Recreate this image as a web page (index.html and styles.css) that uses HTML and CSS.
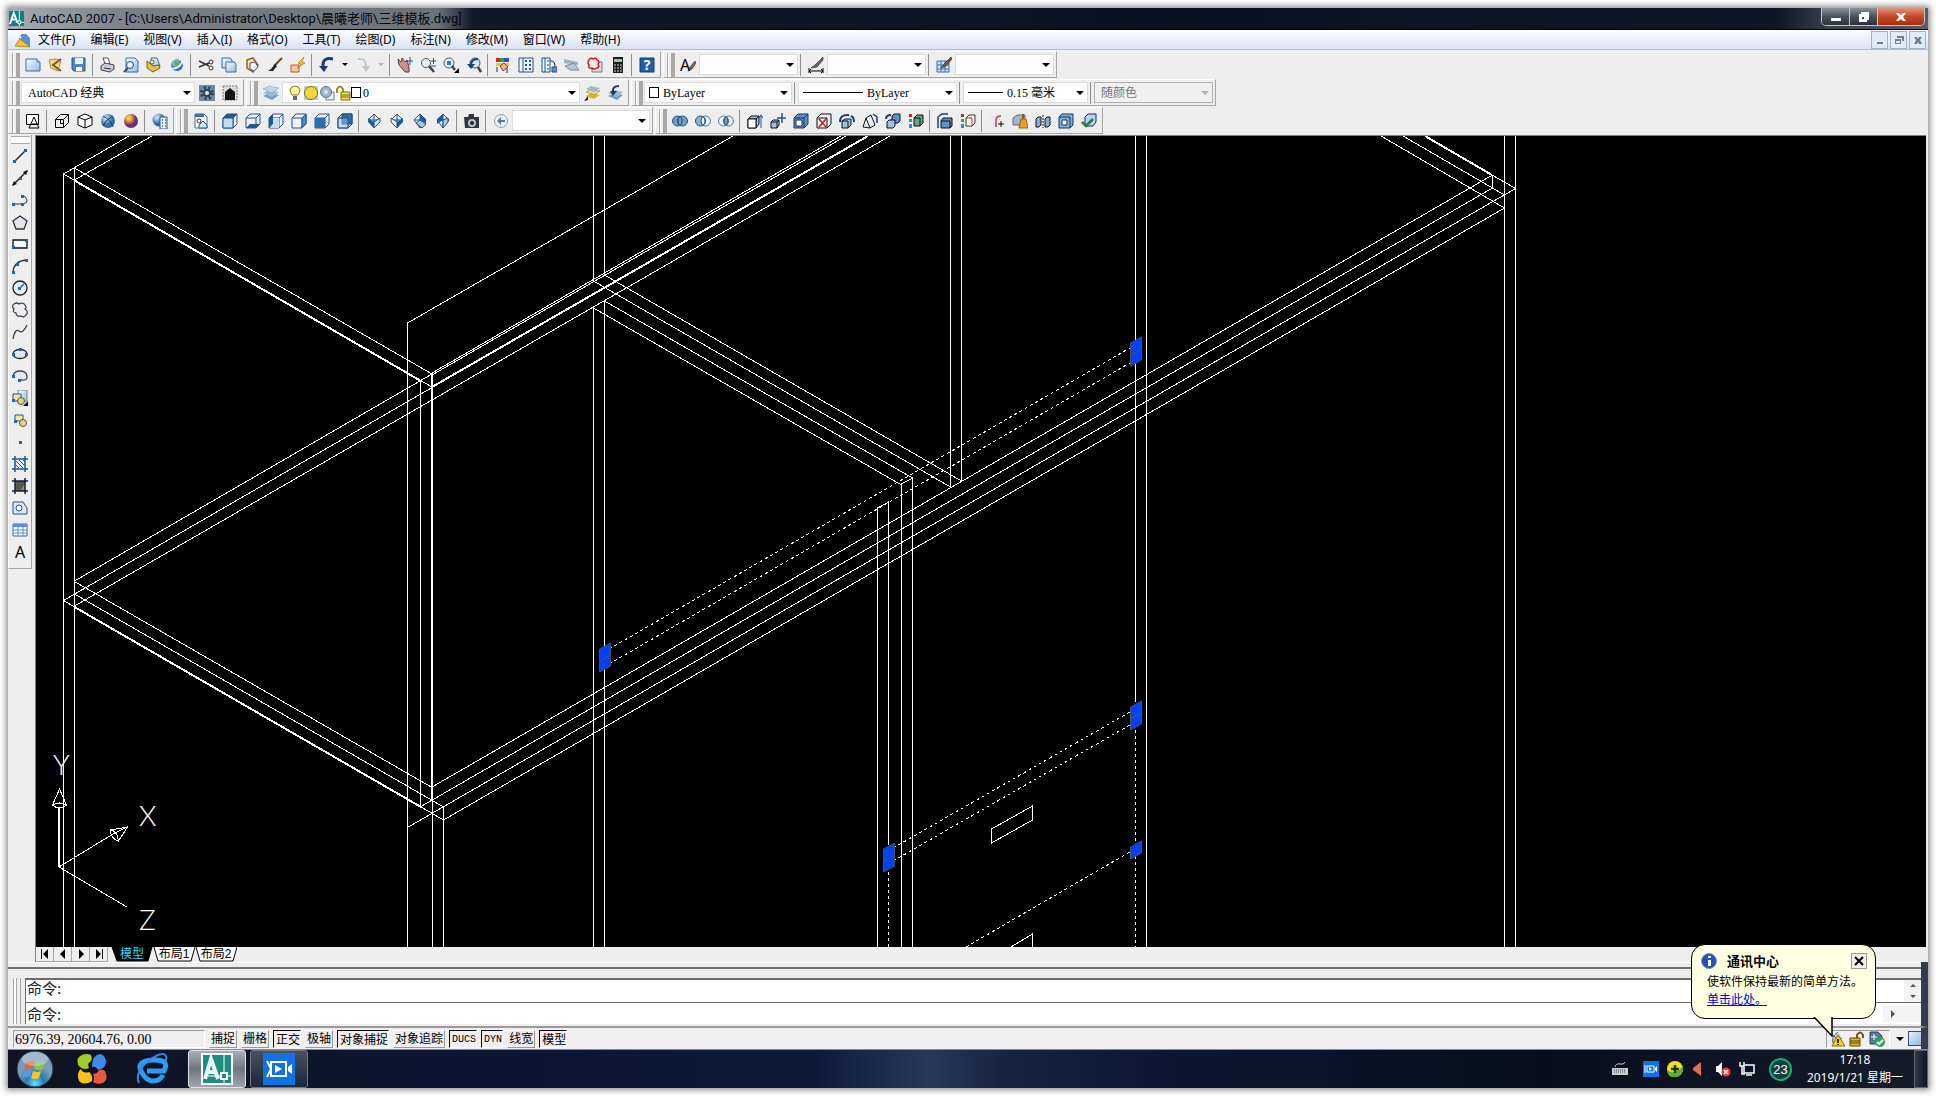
FILE: index.html
```
<!DOCTYPE html>
<html lang="zh-CN">
<head>
    <meta charset="UTF-8">
    <meta name="viewport" content="width=device-width, initial-scale=1.0">
    <title>AutoCAD 2007</title>
    <link rel="stylesheet" href="styles.css">
</head>
<body>

<!-- Icon sprite, every symbol is 16x16 -->
<svg class="sprite" aria-hidden="true">
    <defs>
        <linearGradient id="blue" x1="0" y1="0" x2="1" y2="1"><stop offset="0" stop-color="#fff"/><stop offset="1" stop-color="#8fb8e0"/></linearGradient>
        <radialGradient id="gold" cx=".35" cy=".3"><stop offset="0" stop-color="#fff0b0"/><stop offset=".4" stop-color="#f5a020"/><stop offset="1" stop-color="#6a2a80"/></radialGradient>
        <radialGradient id="orb" cx=".5" cy=".9"><stop offset="0" stop-color="#5fe0ff"/><stop offset=".5" stop-color="#2a78b4"/><stop offset="1" stop-color="#7d9bb5"/></radialGradient>
        <radialGradient id="globe" cx=".35" cy=".3"><stop offset="0" stop-color="#d8ecfa"/><stop offset="1" stop-color="#2f6ca8"/></radialGradient>
    </defs>
    <symbol id="new" viewBox="0 0 16 16"><path d="M1 2h11l3 3v9H1z" fill="url(#blue)" stroke="#3a6ea5"/><path d="M12 2v3h3" fill="#fff" stroke="#3a6ea5"/></symbol>
    <symbol id="open" viewBox="0 0 16 16"><path d="M1 3l5-1 7 1-3 11-7-3z" fill="#f2d98a" stroke="#b08a30"/><path d="M13 2L5 8l8 6" fill="none" stroke="#7a5a20" stroke-width="2"/></symbol>
    <symbol id="save" viewBox="0 0 16 16"><path d="M1 1h13v13H3l-2-2z" fill="#4f86c6" stroke="#24518c"/><path d="M4 1h8v6H4z" fill="#e8f1fa"/><path d="M5 10h6v4H5z" fill="#fff"/></symbol>
    <symbol id="plot" viewBox="0 0 16 16"><path d="M3 1h5l2 6H5z" fill="#fff" stroke="#555"/><path d="M1 9l4-3 9 2v4l-4 3-9-2z" fill="#c8ccd4" stroke="#444"/><path d="M4 11l7 1" stroke="#333"/></symbol>
    <symbol id="preview" viewBox="0 0 16 16"><path d="M3 1h9l3 3v11H3z" fill="url(#blue)" stroke="#3a6ea5"/><circle cx="7" cy="8" r="3.500" fill="#dff0fc" stroke="#444"/><path d="M5 11l-4 4" stroke="#2a4a70" stroke-width="2"/></symbol>
    <symbol id="publish" viewBox="0 0 16 16"><path d="M5 1h6l3 8H6z" fill="url(#blue)" stroke="#3a6ea5"/><path d="M1 4l6 5 6-1 1 3-7 4-6-4z" fill="#e8c040" stroke="#77601c"/><circle cx="6" cy="5" r="2" fill="#fff6cc" stroke="#555"/></symbol>
    <symbol id="web" viewBox="0 0 16 16"><circle cx="8" cy="8" r="6" fill="url(#globe)"/><path d="M4 5q3-3 5 0t-2 5z" fill="#68b060"/><path d="M2 12Q12 12 14 2l-4 1" fill="none" stroke="#e9eef4" stroke-width="2"/></symbol>
    <symbol id="cut" viewBox="0 0 16 16"><path d="M1 4l10 5M1 10l10-4" stroke="#333" stroke-width="1.500"/><circle cx="13" cy="5" r="2" fill="none" stroke="#333"/><circle cx="13" cy="11" r="2" fill="none" stroke="#333"/></symbol>
    <symbol id="copy" viewBox="0 0 16 16"><path d="M1 1h8l2 2v8H1z" fill="url(#blue)" stroke="#3a6ea5"/><path d="M5 5h8l2 2v8H5z" fill="url(#blue)" stroke="#3a6ea5"/></symbol>
    <symbol id="paste" viewBox="0 0 16 16"><path d="M3 3l6-2 5 7-5 7-6-4z" fill="#f3e2a0" stroke="#8a6a20" stroke-width="1.500"/><path d="M6 6l5-1 3 5-4 4-4-2z" fill="#e8f1fa" stroke="#557"/></symbol>
    <symbol id="brush" viewBox="0 0 16 16"><path d="M15 1L7 9" stroke="#6a4422" stroke-width="2"/><path d="M8 7l2 2-4 5H1l3-2z" fill="#222"/></symbol>
    <symbol id="block" viewBox="0 0 16 16"><path d="M1 8h8v7H1z" fill="#f7c8a8" stroke="#b85c20"/><path d="M14 0L8 6l3 1-4 4 8-5-3-1z" fill="#f8c020" stroke="#8a6000" stroke-width=".5"/></symbol>
    <symbol id="undo" viewBox="0 0 16 16"><path d="M14 2Q4 0 4 8v3" fill="none" stroke="#1c3c78" stroke-width="3"/><path d="M0 9h9l-4 6z" fill="#1c3c78"/></symbol>
    <symbol id="redo" viewBox="0 0 16 16"><path d="M3 2q8-1 8 7v2" fill="none" stroke="#c3c5c9" stroke-width="2"/><path d="M7 9h8l-4 6z" fill="#c3c5c9"/></symbol>
    <symbol id="pan" viewBox="0 0 16 16"><path d="M1 2l3 3 1-4 3 4 2-2 2 7v5H8L2 8z" fill="#c98f88" stroke="#6a3a3a"/><path d="M13 0v8M9 4h7" stroke="#24518c"/></symbol>
    <symbol id="zoomrt" viewBox="0 0 16 16"><circle cx="6" cy="6" r="4.500" fill="#e6f2fb" stroke="#555"/><path d="M9 9l5 6" stroke="#444" stroke-width="2.500"/><path d="M11 4h5M13.500 1v6M11 9h5" stroke="#24518c"/></symbol>
    <symbol id="zoomwin" viewBox="0 0 16 16"><circle cx="6" cy="6" r="5" fill="#e6f2fb" stroke="#555"/><path d="M4 4h4v4H4z" fill="#3a78c0"/><path d="M9 9l3 4" stroke="#444" stroke-width="2.500"/><path d="M16 11v5h-5z" fill="#000"/></symbol>
    <symbol id="zoomprev" viewBox="0 0 16 16"><circle cx="9" cy="6" r="5" fill="#d7e6f4" stroke="#555"/><path d="M12 10l3 5" stroke="#444" stroke-width="2.500"/><path d="M12 2q-7 0-7 6" fill="none" stroke="#1c3c78" stroke-width="2"/><path d="M1 7h8l-4 5z" fill="#1c3c78"/></symbol>
    <symbol id="props" viewBox="0 0 16 16"><path d="M1 1h4v4H1z" fill="#e02020"/><path d="M5 1h4v4H5z" fill="#30a030"/><path d="M9 1h5v4H9z" fill="#2850d0"/><path d="M1 6h13v3H1z" fill="#d8d020"/><path d="M5 9l4-3 4 4-5 4z" fill="#e9b590" stroke="#744"/><path d="M2 10v5M12 11v5" stroke="#333"/></symbol>
    <symbol id="design" viewBox="0 0 16 16"><path d="M1 1h14v14H1z" fill="#eef5fc" stroke="#24518c"/><path d="M5 1v14" stroke="#24518c"/><path d="M7 4h2m2 0h2M7 8h2m2 0h2M7 12h2m2 0h2" stroke="#24518c" stroke-width="2"/></symbol>
    <symbol id="palette" viewBox="0 0 16 16"><path d="M1 1h8v14H1z" fill="#eef5fc" stroke="#24518c"/><path d="M4 1v14M6 4h2M6 8h2M6 12h2" stroke="#24518c"/><path d="M9 4q5-1 5 6" fill="none" stroke="#222"/><path d="M11 10h5v5h-5z" fill="#5b90cc" stroke="#24518c"/></symbol>
    <symbol id="sheet" viewBox="0 0 16 16"><path d="M0 2l14 3v3L0 6z" fill="#9bb4c8"/><path d="M1 9l9-3 5 7H6z" fill="#b9c6cf" stroke="#7b8b98"/></symbol>
    <symbol id="markup" viewBox="0 0 16 16"><path d="M5 5h10v10H5z" fill="#ddd" stroke="#777"/><path d="M2 3q2-3 4-1 3-2 4 1 3 1 1 4 2 3-1 4-3 2-5 0-4 1-3-3-2-3 0-5z" fill="#fbeaea" stroke="#d01818" stroke-width="1.500"/></symbol>
    <symbol id="calc" viewBox="0 0 16 16"><path d="M3 0h10v16H3z" fill="#1c1c1c"/><path d="M4 2h8v3H4z" fill="#9ec49a"/><path d="M4 8h8M4 11h8M4 14h8" stroke="#ddd" stroke-dasharray="2 1"/><path d="M11 7h1v7h-1z" fill="#e02020"/></symbol>
    <symbol id="help" viewBox="0 0 16 16"><path d="M1 1h14v14H1z" fill="#1f5fa8" stroke="#123c70"/></symbol>
    <symbol id="tstyle" viewBox="0 0 16 16"><path d="M15 4l-5 6-2 4 4-2 4-6z" fill="#8a6a40" stroke="#222" stroke-width=".6"/></symbol>
    <symbol id="dstyle" viewBox="0 0 16 16"><path d="M1 11v5M15 11v5M1 14h14M3 12l-2 2 2 2M13 12l2 2-2 2" stroke="#000" fill="none"/><path d="M15 0L7 8l-4 3 6-1 6-7z" fill="#6a6a50" stroke="#222" stroke-width=".6"/></symbol>
    <symbol id="tbstyle" viewBox="0 0 16 16"><path d="M1 4h12v11H1z" fill="#cfe2f6" stroke="#3a6ea5"/><path d="M1 8h12M1 12h12M5 4v11M9 4v11" stroke="#3a6ea5"/><path d="M15 0L8 7l-3 4 5-2 6-7z" fill="#7a5a30" stroke="#222" stroke-width=".6"/></symbol>
    <symbol id="gear" viewBox="0 0 16 16"><path d="M0 0h16v16H0z" fill="#6f8ba3"/><circle cx="8" cy="8" r="5" fill="none" stroke="#39444f" stroke-width="4" stroke-dasharray="2 2"/><circle cx="8" cy="8" r="4" fill="#39444f"/><circle cx="8" cy="8" r="2" fill="#e3e8ee"/></symbol>
    <symbol id="home" viewBox="0 0 16 16"><path d="M1 1h14v14H1z" fill="#ddd" stroke="#777" stroke-dasharray="2 1"/><path d="M3 7l5-4 5 4v8H3z" fill="#151515"/></symbol>
    <symbol id="layers" viewBox="0 0 16 16"><path d="M0 11l6-3 10 2-7 5z" fill="#7a9cbe"/><path d="M0 8l6-3 10 2-7 5z" fill="#9db8d2"/><path d="M0 4l6-3 10 2-7 5z" fill="#c3d5e6" stroke="#7a9cbe" stroke-width=".5"/></symbol>
    <symbol id="laycur" viewBox="0 0 16 16"><path d="M2 11l5-3 9 2-6 4z" fill="#d9b430"/><path d="M2 7l5-3 9 2-6 4z" fill="#f2dc70" stroke="#8a7020" stroke-width=".5"/><path d="M2 4l5-3 9 2-6 4z" fill="#9db8d2"/><path d="M0 16l4-5v4z" fill="#123"/></symbol>
    <symbol id="layprev" viewBox="0 0 16 16"><path d="M1 11l6-3 9 2-6 5z" fill="#7a9cbe"/><path d="M1 8l6-3 9 2-6 5z" fill="#9db8d2"/><path d="M12 1Q5 1 6 7" fill="none" stroke="#1c3c78" stroke-width="2"/><path d="M3 6h7l-4 5z" fill="#1c3c78"/></symbol>
    <symbol id="bulb" viewBox="0 0 16 16"><path d="M5 10Q3 7 3 5q1-4 5-4t5 4q0 2-2 5z" fill="#fdf6a0" stroke="#8a7a20"/><path d="M6 11h4v4H6z" fill="#667"/></symbol>
    <symbol id="sun" viewBox="0 0 16 16"><path d="M1 1h14v14H1z" fill="#b9cad8"/><circle cx="8" cy="8" r="6.500" fill="#f8d838" stroke="#777020"/></symbol>
    <symbol id="freeze" viewBox="0 0 16 16"><path d="M7 7h8v8H7z" fill="#eef" stroke="#778"/><circle cx="7" cy="7" r="5.500" fill="#9db8c8" stroke="#56788c"/><circle cx="7" cy="7" r="2" fill="#d9e5ec"/></symbol>
    <symbol id="lock" viewBox="0 0 16 16"><path d="M2 8V4q3-5 6 0v4" fill="none" stroke="#99902a" stroke-width="2"/><path d="M6 7h9v8H6z" fill="#f0e040" stroke="#7a7010"/><path d="M6 10h9M6 12h9" stroke="#7a7010"/></symbol>
    <symbol id="wire2d" viewBox="0 0 16 16"><path d="M1.500 1.500h12v10h-12z" fill="#fff" stroke="#000"/><path d="M4 15l5-11 5 11zM6 11h6" fill="none" stroke="#000"/></symbol>
    <symbol id="wire3d" viewBox="0 0 16 16"><path d="M1.500 6.500h8v8h-8zM1.500 6.500l5-5h8v8l-5 5M9.500 6.500l5-5M6.500 6.500v4h3" fill="none" stroke="#000"/></symbol>
    <symbol id="hidden" viewBox="0 0 16 16"><path d="M8 1l7 3v8l-7 3-7-3V4zM1 4l7 3 7-3M8 7v8" fill="#fff" stroke="#000"/></symbol>
    <symbol id="realistic" viewBox="0 0 16 16"><circle cx="8" cy="8" r="7" fill="url(#globe)"/><path d="M3 3q8 4 10 11M13 3Q5 7 3 13" fill="none" stroke="#123c60"/></symbol>
    <symbol id="concept" viewBox="0 0 16 16"><circle cx="8" cy="8" r="7" fill="url(#gold)"/></symbol>
    <symbol id="vsman" viewBox="0 0 16 16"><circle cx="7" cy="7" r="6.500" fill="url(#globe)"/><path d="M8 4h7v12H8z" fill="#eef5fc" stroke="#24518c"/><path d="M10 7h1m2 0h1M10 10h1m2 0h1M10 13h1m2 0h1" stroke="#24518c" stroke-width="1.500"/></symbol>
    <symbol id="views" viewBox="0 0 16 16"><path d="M2 1h9l3 3v11H2z" fill="#fff" stroke="#3a6ea5"/><path d="M2 1h9v3H2z" fill="#3a6ea5"/><path d="M6 12l4-4 4 4M6 12v3h8v-3" fill="#cfe2f6" stroke="#24518c"/><circle cx="6" cy="8" r="2" fill="#fff" stroke="#333"/></symbol>
    <symbol id="cube" viewBox="0 0 16 16"><path d="M1 5l4-4h10v10l-4 4H1z" fill="#eaf3fb" stroke="#24518c"/><path d="M1 5h10v10M11 5l4-4" fill="none" stroke="#24518c"/></symbol>
    <symbol id="vtop" viewBox="0 0 16 16"><use href="#cube"/><path d="M1 5l4-4h10l-4 4z" fill="#1f5a90"/><path d="M1 5h10v10H1z" fill="#c4dcf0" stroke="#24518c"/></symbol>
    <symbol id="vbottom" viewBox="0 0 16 16"><use href="#cube"/><path d="M1 15l4-4h10l-4 4z" fill="#1f5a90"/></symbol>
    <symbol id="vleft" viewBox="0 0 16 16"><use href="#cube"/><path d="M1 5l4-4v10l-4 4z" fill="#1f5a90"/><path d="M5 5h6v10H2l3-4z" fill="#c4dcf0"/></symbol>
    <symbol id="vright" viewBox="0 0 16 16"><use href="#cube"/><path d="M11 5l4-4v10l-4 4z" fill="#4f8ac0" stroke="#24518c"/></symbol>
    <symbol id="vfront" viewBox="0 0 16 16"><use href="#cube"/><path d="M1 5h10v10H1z" fill="#2f6ca8"/></symbol>
    <symbol id="vback" viewBox="0 0 16 16"><use href="#cube"/><path d="M5 1h10v10H5z" fill="#2f6ca8" stroke="#1a4878"/><path d="M1 5h10v10H1z" fill="#9cc3e4" fill-opacity=".5" stroke="#24518c"/></symbol>
    <symbol id="iso" viewBox="0 0 16 16"><path d="M8 1l6 6-6 8-6-8z" fill="#eaf3fb" stroke="#24518c"/><path d="M2 7l6 0 6 0M8 1v14" fill="none" stroke="#24518c"/></symbol>
    <symbol id="isw" viewBox="0 0 16 16"><use href="#iso"/><path d="M2 5l6 4v6l-6-6z" fill="#1f5a90"/><path d="M8 9l6-4v4l-6 6z" fill="#cfe2f6" stroke="#24518c"/></symbol>
    <symbol id="ise" viewBox="0 0 16 16"><use href="#iso"/><path d="M8 9l6-4v4l-6 6z" fill="#1f5a90"/><path d="M2 5l6 4v6l-6-6z" fill="#eaf3fb" stroke="#24518c"/></symbol>
    <symbol id="ine" viewBox="0 0 16 16"><use href="#iso"/><path d="M8 1l6 5v5L8 7z" fill="#1f5a90"/><path d="M8 7l6 4-4 4-6-5z" fill="#a8cbe8" stroke="#24518c"/></symbol>
    <symbol id="inw" viewBox="0 0 16 16"><use href="#iso"/><path d="M8 1L2 6v5l6-4z" fill="#1f5a90"/><path d="M8 7v8l5-6V5z" fill="#a8cbe8" stroke="#24518c"/></symbol>
    <symbol id="camera" viewBox="0 0 16 16"><path d="M0 4h4l1-3h5v3h5v11H1z" fill="#30363e"/><circle cx="8" cy="10" r="4" fill="#b9c4cf"/><circle cx="8" cy="10" r="2" fill="#222"/></symbol>
    <symbol id="prevview" viewBox="0 0 16 16"><circle cx="8" cy="8" r="6.500" fill="#eef2f6" stroke="#8aa0b4"/><path d="M12 7H8V4L4 8l4 4V9h4z" fill="#55799c"/></symbol>
    <symbol id="union" viewBox="0 0 16 16"><circle cx="5.500" cy="8" r="5" fill="#6ea0c0" stroke="#1f4f74"/><circle cx="10.500" cy="8" r="5" fill="#6ea0c0" stroke="#1f4f74"/><ellipse cx="8" cy="8" rx="2" ry="4" fill="none" stroke="#1f4f74"/></symbol>
    <symbol id="subtract" viewBox="0 0 16 16"><circle cx="10.500" cy="8" r="5" fill="#eef4f8" stroke="#4a7898"/><circle cx="5.500" cy="8" r="5" fill="#8ab4d0" stroke="#1f4f74"/><ellipse cx="8" cy="8" rx="2" ry="4" fill="#eef4f8" stroke="#1f4f74"/></symbol>
    <symbol id="intersect" viewBox="0 0 16 16"><circle cx="5.500" cy="8" r="5" fill="#eef4f8" stroke="#4a7898"/><circle cx="10.500" cy="8" r="5" fill="none" stroke="#4a7898"/><ellipse cx="8" cy="8" rx="2" ry="4" fill="#6ea0c0" stroke="#1f4f74"/></symbol>
    <symbol id="box" viewBox="0 0 16 16"><path d="M1 6l3-3h8v8l-3 4H1z" fill="#9cc3e4" stroke="#111"/><path d="M1 6h8v9M9 6l3-3" fill="none" stroke="#111"/></symbol>
    <symbol id="sbox" viewBox="0 0 16 16"><path d="M1 9l2-2h6v5l-2 3H1z" fill="#9cc3e4" stroke="#111"/><path d="M1 9h6v6M7 9l2-2" fill="none" stroke="#111"/></symbol>
    <symbol id="extrude" viewBox="0 0 16 16"><use href="#box"/><path d="M1 6h8v9H1z" fill="#fff" stroke="#111"/><path d="M14 15V2M12 5l2-3 2 3" fill="none" stroke="#24518c"/></symbol>
    <symbol id="moveface" viewBox="0 0 16 16"><use href="#sbox"/><path d="M12 0v10M7 5h9" stroke="#24518c" stroke-width="1.500"/></symbol>
    <symbol id="offset" viewBox="0 0 16 16"><path d="M1 5l4-4h10v10l-4 4H1z" fill="#5b90cc" stroke="#14365c"/><path d="M3 7h6v6H3z" fill="#fff" stroke="#14365c"/><path d="M1 5h10v10M11 5l4-4" fill="none" stroke="#14365c"/></symbol>
    <symbol id="delface" viewBox="0 0 16 16"><path d="M1 5l4-4h10v10l-4 4H1z" fill="#eee" stroke="#111"/><path d="M1 5h10v10" fill="none" stroke="#111"/><path d="M3 6l7 8M10 6l-7 8" stroke="#d01818" stroke-width="1.500"/></symbol>
    <symbol id="rotface" viewBox="0 0 16 16"><path d="M3 8l3-2h6v6l-3 3H3z" fill="#9cc3e4" stroke="#111"/><path d="M3 8h6v7" fill="none" stroke="#111"/><path d="M1 9q0-8 9-7M15 9q0-5-3-6" fill="none" stroke="#1c3c78" stroke-width="2"/></symbol>
    <symbol id="taper" viewBox="0 0 16 16"><path d="M1 14L4 5l5-3 4 10-5 3z" fill="#eaf3fb" stroke="#111"/><path d="M4 5l4 10" fill="none" stroke="#111"/><path d="M11 1l4 3v6" fill="none" stroke="#1c3c78" stroke-width="1.500"/></symbol>
    <symbol id="copyface" viewBox="0 0 16 16"><path d="M7 3l2-2h6v7l-2 2H7z" fill="#5b90cc" stroke="#111"/><path d="M2 9l2-2h6v6l-2 2H2z" fill="#9cc3e4" stroke="#111"/><path d="M1 6q0-4 5-4" fill="none" stroke="#1c3c78" stroke-width="2"/></symbol>
    <symbol id="colorface" viewBox="0 0 16 16"><path d="M6 5l3-3h6v8l-3 3H6z" fill="#5fa888" stroke="#111"/><path d="M6 5h6v8" fill="none" stroke="#111"/><path d="M1 1h3v3H1z" fill="#e02020"/><path d="M1 6h3v3H1z" fill="#30b040"/><path d="M1 11h3v4H1z" fill="#2890e0"/></symbol>
    <symbol id="copyedge" viewBox="0 0 16 16"><path d="M4 8l2-3h9v8l-2 2H4z" fill="#5b90cc" stroke="#111"/><path d="M4 8h9v7" fill="none" stroke="#111"/><path d="M1 15V4l4-3h6" fill="none" stroke="#1c3c78" stroke-width="1.500"/></symbol>
    <symbol id="coloredge" viewBox="0 0 16 16"><path d="M6 5l3-3h6v8l-3 3H6z" fill="#fff" stroke="#333"/><path d="M6 5h6v8" fill="none" stroke="#d01818"/><path d="M1 1h3v3H1z" fill="#e02020"/><path d="M1 6h3v3H1z" fill="#30b040"/><path d="M1 11h3v4H1z" fill="#2890e0"/></symbol>
    <symbol id="imprint" viewBox="0 0 16 16"><path d="M1 3l8-1v8l-6 2z" fill="#e6e6ff"/><path d="M7 14V7q0-4 5-4" fill="none" stroke="#c04040" stroke-width="1.500"/><path d="M12 8v6M9 11h6" stroke="#111"/></symbol>
    <symbol id="clean" viewBox="0 0 16 16"><path d="M1 5l4-3h8v10H1z" fill="#a0b8cc" stroke="#667"/><path d="M11 1v6" stroke="#8a5a10" stroke-width="2"/><path d="M9 6h5l2 9H7z" fill="#f0a020" stroke="#a06000"/></symbol>
    <symbol id="separate" viewBox="0 0 16 16"><path d="M1 6l2-2h3v8l-2 2H1z" fill="#7fb0d8" stroke="#111"/><path d="M10 6l2-2h3v8l-2 2h-3z" fill="#7fb0d8" stroke="#111"/><path d="M8 2v13" stroke="#111" stroke-dasharray="2 1"/></symbol>
    <symbol id="shell" viewBox="0 0 16 16"><path d="M1 4l3-3h11v11l-3 3H1z" fill="#7fb0d8" stroke="#14365c"/><path d="M1 4h11v11" fill="none" stroke="#14365c"/><path d="M4 7h5v5H4z" fill="#fff" stroke="#14365c"/></symbol>
    <symbol id="check" viewBox="0 0 16 16"><path d="M4 4l3-3h8v8l-3 4H4z" fill="#b9d5ee" stroke="#14365c"/><path d="M1 9l4 4 7-7" fill="none" stroke="#208040" stroke-width="2.500"/></symbol>

    <symbol id="line" viewBox="0 0 16 16"><path d="M2 14L14 2" stroke="#222" stroke-width="1.500"/><path d="M1 12h3v3H1zM12 1h3v3h-3z" fill="#1868b8"/></symbol>
    <symbol id="xline" viewBox="0 0 16 16"><path d="M1 15L15 1" stroke="#222" stroke-width="1.500"/><path d="M0 16l2-5 3 3zM16 0l-5 2 3 3z" fill="#111"/><path d="M7 7h3v3H7z" fill="#1868b8"/></symbol>
    <symbol id="pline" viewBox="0 0 16 16"><path d="M2 12h9q5-1 4-4t-4-5" fill="none" stroke="#333"/><path d="M0 11h3v3H0zM9 11h3v3H9zM9 3h3v3H9z" fill="#1868b8"/></symbol>
    <symbol id="polygon" viewBox="0 0 16 16"><path d="M8 2l7 5-3 8H4L1 7z" fill="#e3e6ee" stroke="#333" stroke-width="1.300"/></symbol>
    <symbol id="rect" viewBox="0 0 16 16"><path d="M1 4h14v8H1z" fill="#f4f6fa" stroke="#111" stroke-width="1.300"/><path d="M0 10h3v3H0zM13 3h3v3h-3z" fill="#1868b8"/></symbol>
    <symbol id="arc" viewBox="0 0 16 16"><path d="M1 14Q2 3 14 2" fill="none" stroke="#333" stroke-width="1.300"/><path d="M0 13h3v3H0zM4 5h3v3H4zM13 1h3v3h-3z" fill="#1868b8"/></symbol>
    <symbol id="circle" viewBox="0 0 16 16"><circle cx="8" cy="8" r="7" fill="#e6ebf4" stroke="#222" stroke-width="1.300"/><path d="M8 8l4-4" stroke="#1868b8" stroke-width="1.500"/><path d="M6 7h3v3H6z" fill="#1868b8"/></symbol>
    <symbol id="cloud" viewBox="0 0 16 16"><path d="M2 7Q-1 4 2 2t5 0q4-2 6 1 2 3 0 4 4 3 1 6-2 3-5 1-5 1-5-3-4-1-2-4z" fill="#eceef3" stroke="#444" stroke-width="1.300"/></symbol>
    <symbol id="spline" viewBox="0 0 16 16"><path d="M1 15Q3 4 7 7t8-6" fill="none" stroke="#444" stroke-width="1.300"/></symbol>
    <symbol id="ellipse" viewBox="0 0 16 16"><ellipse cx="8" cy="8" rx="7" ry="4.500" fill="#dfe6f0" stroke="#222" stroke-width="1.300"/><path d="M0 7h3v3H0zM13 7h3v3h-3zM7 2h3v3H7z" fill="#1868b8"/></symbol>
    <symbol id="earc" viewBox="0 0 16 16"><path d="M1 8Q2 3 8 3t7 5-7 4" fill="#e4e7ee" stroke="#444" stroke-width="1.300"/><path d="M0 7h3v3H0zM6 11h3v3H6z" fill="#1868b8"/></symbol>
    <symbol id="insert" viewBox="0 0 16 16"><path d="M6 0h9v11H6z" fill="url(#blue)" stroke="#789"/><path d="M1 4h8v7H1z" fill="#f0e79a" stroke="#24518c"/><circle cx="9" cy="11" r="3.500" fill="#e2d67c" stroke="#555"/><path d="M0 9h3v3H0z" fill="#1868b8"/><path d="M16 11v5h-5z"/></symbol>
    <symbol id="mkblock" viewBox="0 0 16 16"><path d="M3 3h8v6H3z" fill="#f0e79a" stroke="#24518c"/><circle cx="11" cy="11" r="3.500" fill="#e2d67c" stroke="#555"/><path d="M2 8h3v3H2z" fill="#1868b8"/></symbol>
    <symbol id="point" viewBox="0 0 16 16"><path d="M7 7h3v3H7z" fill="#1868b8"/></symbol>
    <symbol id="hatch" viewBox="0 0 16 16"><path d="M0 3h16M0 13h16M3 0v16M13 0v16" stroke="#24518c" stroke-width="1.500"/><path d="M4 5l7 7M4 9l3 3M7 4l5 5M11 4l2 2" stroke="#24518c"/></symbol>
    <symbol id="gradient" viewBox="0 0 16 16"><path d="M3 3h10v10H3z" fill="#55584a"/><path d="M9 12l4-7v7z" fill="#9a9450"/><path d="M0 3h16M0 13h16M3 0v16M13 0v16" stroke="#14203c" stroke-width="1.500"/></symbol>
    <symbol id="region" viewBox="0 0 16 16"><path d="M1 2h10l4 6v6H1z" fill="#dbe8f5" stroke="#24518c"/><circle cx="7" cy="8" r="3" fill="#fff" stroke="#24518c"/></symbol>
    <symbol id="table" viewBox="0 0 16 16"><path d="M1 2h14v12H1z" fill="#fff" stroke="#3a6ea5"/><path d="M1 2h14v3H1z" fill="#5b90dc"/><path d="M1 8h14M1 11h14M6 5v9M11 5v9" stroke="#5b90cc"/></symbol>
</svg>

<div class="desktop">

    <!-- Title bar -->
    <header class="titlebar">
        <svg class="app-icon" viewBox="0 0 16 16"><path d="M0 0h16v16H0z" fill="#0f8278"/><path d="M1 14L5 2l4 10M3 9h5" fill="none" stroke="#fff" stroke-width="2"/><path d="M11 0v16M7 12h9" stroke="#dff" /><path d="M9.500 10.500h3v3h-3z" fill="#0f8278" stroke="#fff"/></svg>
        <h1>AutoCAD 2007 - [C:\Users\Administrator\Desktop\晨曦老师\三维模板.dwg]</h1>
        <div class="caption">
            <button aria-label="最小化"><svg viewBox="0 0 12 12"><path d="M1 7h10v3H1z"/></svg></button>
            <button aria-label="还原"><svg viewBox="0 0 12 12"><path d="M3 1h8v8H9V3H3zM1 3h8v8H1zm3 3v2h2V6z" fill-rule="evenodd"/></svg></button>
            <button class="close" aria-label="关闭"><svg viewBox="0 0 12 12"><path d="M1 2h3l2 2 2-2h3L8 6l3 4H8L6 8l-2 2H1l3-4z"/></svg></button>
        </div>
    </header>

    <!-- Menu bar -->
    <nav class="menubar">
        <svg class="doc-icon" viewBox="0 0 16 16"><path d="M4 2h7l4 4v9H4z" fill="#5b90cc"/><path d="M0 14l5-7 10 8z" fill="#f5c430" stroke="#b08a20"/><path d="M1 1l5 5M6 1L1 6" stroke="#fff" stroke-width="2"/></svg>
        <button>文件(F)</button>
        <button>编辑(E)</button>
        <button>视图(V)</button>
        <button>插入(I)</button>
        <button>格式(O)</button>
        <button>工具(T)</button>
        <button>绘图(D)</button>
        <button>标注(N)</button>
        <button>修改(M)</button>
        <button>窗口(W)</button>
        <button>帮助(H)</button>
        <div class="mdi">
            <button aria-label="最小化窗口"><svg viewBox="0 0 12 12"><path d="M3 8h6v2H3z"/></svg></button>
            <button aria-label="还原窗口"><svg viewBox="0 0 12 12"><path d="M4 2h7v5H9V4H4zM2 5h6v5H2zm1 2v2h4V7z" fill-rule="evenodd"/></svg></button>
            <button aria-label="关闭窗口"><svg viewBox="0 0 12 12"><path d="M2 3h3l1 2 1-2h3L8 6l2 4H7L6 8l-1 2H2l2-4z"/></svg></button>
        </div>
    </nav>

    <!-- Toolbars, the data-tools lists are filled in by tools.js -->
    <div class="bars">
        <div class="bar-row">
            <div class="bar">
                <span class="tools" data-tools="new open save | plot preview publish web | cut copy paste brush block | undo v redo x | pan zoomrt zoomwin zoomprev | props design palette sheet markup calc | help"></span>
            </div>
            <div class="bar">
                <span class="tools" data-tools="tstyle"></span>
                <div class="combo style"><select aria-label="文字样式"><option></option></select></div>
                <span class="tools" data-tools="| dstyle"></span>
                <div class="combo style"><select aria-label="标注样式"><option></option></select></div>
                <span class="tools" data-tools="| tbstyle"></span>
                <div class="combo style"><select aria-label="表格样式"><option></option></select></div>
            </div>
        </div>
        <div class="bar-row">
            <div class="bar">
                <div class="combo space"><select aria-label="工作空间"><option>AutoCAD 经典</option></select></div>
                <span class="tools" data-tools="gear home"></span>
            </div>
            <div class="bar">
                <span class="tools" data-tools="layers"></span>
                <div class="combo layer">
                    <svg><use href="#bulb"/></svg><svg><use href="#sun"/></svg><svg><use href="#freeze"/></svg><svg><use href="#lock"/></svg>
                    <i class="swatch"></i>
                    <select aria-label="图层"><option>0</option></select>
                </div>
                <span class="tools" data-tools="laycur layprev"></span>
            </div>
            <div class="bar">
                <div class="combo color"><i class="swatch"></i><select aria-label="颜色"><option>ByLayer</option></select></div>
                <i class="sep"></i>
                <div class="combo ltype"><i class="stroke"></i><select aria-label="线型"><option>ByLayer</option></select></div>
                <i class="sep"></i>
                <div class="combo lweight"><i class="stroke"></i><select aria-label="线宽"><option>0.15 毫米</option></select></div>
                <i class="sep"></i>
                <div class="combo plot off"><select aria-label="打印样式" disabled><option>随颜色</option></select></div>
            </div>
        </div>
        <div class="bar-row">
            <div class="bar">
                <span class="tools" data-tools="wire2d | wire3d hidden realistic concept | vsman"></span>
            </div>
            <div class="bar">
                <span class="tools" data-tools="views | vtop vbottom vleft vright vfront vback | isw ise ine inw | camera | prevview"></span>
                <div class="combo view"><select aria-label="视图"><option></option></select></div>
            </div>
            <div class="bar">
                <span class="tools" data-tools="union subtract intersect | extrude moveface offset delface rotface taper copyface colorface | copyedge coloredge | imprint clean separate shell check"></span>
            </div>
        </div>
    </div>

    <!-- Draw toolbar and model space -->
    <main class="work">
        <div class="side">
            <div class="drawbar" data-tools="line xline pline polygon rect arc circle cloud spline ellipse earc insert mkblock point hatch gradient region table mtext"></div>
        </div>
        <div class="view-wrap">
            <svg class="model" viewBox="36 136 1890 811" preserveAspectRatio="xMinYMin slice">
                <g class="wire">
                    <!-- left cabinet -->
                    <path d="M63.500 947V174L129 136M74.500 947V168M74.500 180L152 136"/>
                    <path d="M74.500 168L432 374M63.500 174L432 387"/>
                    <path class="bold" d="M74.500 180.500L421 381"/>
                    <path d="M74.500 581L432 374M63.500 600.500L432 387.500M74.500 606L432 400"/>
                    <path d="M74.500 581.500L432 787.500M74.500 594L443.500 807M63.500 600.500L443.500 820"/>
                    <path class="bold" d="M74.500 607L421 807"/>
                    <path d="M407.500 947V323L733 136M420.500 381V807M432.500 800V947M443.500 807V947"/>
                    <path class="bold" d="M432 373V800"/>
                    <!-- upper rail -->
                    <path d="M432 373L841 136M432 375L846 136M432 400L890 136"/>
                    <path class="bold" d="M432 387L868 136"/>
                    <!-- middle partition -->
                    <path d="M593.500 136V281L950.500 487V136M604.500 136V275L961.500 481V136"/>
                    <path d="M593.500 947V308L901.500 485V947M604.500 947V301L912.500 478V947M901.500 484L912.500 478"/>
                    <path d="M877.500 947V508L888.500 502V845"/>
                    <!-- lower rail -->
                    <path d="M432 787L1492.500 175M421 806.500L1492.500 188M407.500 827.500L1515.500 188.500M443.500 820L1504.500 208"/>
                    <path d="M1135.500 136V702M1146.500 136V947M1504.500 136V947M1515.500 136V947M1492.500 175V188"/>
                    <path d="M1492 175L1515.500 188.500M1403 136L1504.500 195M1381 136L1504.500 208"/>
                    <path class="bold" d="M1425 136L1492 175"/>
                    <!-- drawer handles -->
                    <path d="M991.500 829L1032.500 806V820L991.500 843zM1011 947L1032.500 934V947"/>
                </g>
                <g class="picked">
                    <path d="M604 652L1135 345M604 667L1135 360"/>
                    <path d="M888 851L1135 709M888 864L1135 722M966 947L1135 849"/>
                    <path d="M888.500 872V947M1135.500 730V947"/>
                </g>
                <g class="grips">
                    <path id="grip" d="M599.500 649l11-6v12l-11 6zM599.500 661l11-6v11l-11 6z"/>
                    <use href="#grip" x="531" y="-306"/>
                    <use href="#grip" x="531" y="58"/>
                    <use href="#grip" x="284" y="200"/>
                    <path d="M1130.500 847l11-6v12l-11 6z"/>
                </g>
                <g class="ucs">
                    <path d="M59.500 867V808M58.500 867V808M59 867L113 834M59 867L127 907"/>
                    <path d="M59.500 789l-7 16q7 6 14 0zM52.500 805q7-4 14 0M110.500 830l17-3-9 14q-8-2-8-11zM110.500 830q7 1 8 11M113 834l14-7"/>
                    <text x="53" y="775">Y</text>
                    <text x="139" y="826">X</text>
                    <text x="139" y="930">Z</text>
                </g>
            </svg>
            <div class="tabs">
                <button class="nav" aria-label="首页"><svg viewBox="0 0 10 10"><path d="M1 0h1v10H1zM8 0v10L3 5z"/></svg></button>
                <button class="nav" aria-label="上一页"><svg viewBox="0 0 10 10"><path d="M7 0v10L2 5z"/></svg></button>
                <button class="nav" aria-label="下一页"><svg viewBox="0 0 10 10"><path d="M3 0v10l5-5z"/></svg></button>
                <button class="nav" aria-label="末页"><svg viewBox="0 0 10 10"><path d="M8 0h1v10H8zM2 0v10l5-5z"/></svg></button>
                <button class="tab active"><svg viewBox="0 0 42 15"><path d="M1 0l5 14h31l4-14"/></svg><span>模型</span></button>
                <button class="tab"><svg viewBox="0 0 42 15"><path d="M1 0l4 14h33l4-14"/></svg><span>布局1</span></button>
                <button class="tab"><svg viewBox="0 0 42 15"><path d="M1 0l4 14h33l4-14"/></svg><span>布局2</span></button>
            </div>
        </div>
    </main>

    <!-- Command line -->
    <section class="command">
        <div class="cmd-box">
            <div class="cmd-log"><span>命令:</span><span class="vscroll"><i class="up"></i><i class="down"></i></span></div>
            <div class="cmd-line"><label for="cmd">命令:</label><input id="cmd" type="text" autocomplete="off"><span class="hscroll"></span></div>
        </div>
    </section>

    <!-- Status bar -->
    <footer class="status">
        <output class="coords">6976.39, 20604.76, 0.00</output>
        <button>捕捉</button>
        <button>栅格</button>
        <button class="on">正交</button>
        <button>极轴</button>
        <button class="on">对象捕捉</button>
        <button>对象追踪</button>
        <button class="on en">DUCS</button>
        <button class="on en">DYN</button>
        <button>线宽</button>
        <button class="on">模型</button>
        <div class="status-tray">
            <svg viewBox="0 0 16 16"><path d="M1 1l7 7M9 1Q2 6 4 12l9-5" fill="#b8cbe0" stroke="#567"/><path d="M9 4l7 11H3z" fill="#f8d020" stroke="#8a7000"/><path d="M9 8v4M9 13v1" stroke="#000" stroke-width="1.500"/></svg>
            <svg viewBox="0 0 16 16"><path d="M8 7V4q3-5 6 0v3" fill="none" stroke="#6a5a10" stroke-width="2"/><path d="M1 7h10v8H1z" fill="#e0b820" stroke="#5a4a00"/><path d="M1 10h10M1 12h10" stroke="#5a4a00"/></svg>
            <svg viewBox="0 0 16 16"><path d="M1 1h8l4 4v8H1z" fill="#4f7c98" stroke="#345"/><path d="M5 3v6M2 6h6" stroke="#fff"/><circle cx="11" cy="11" r="5" fill="#2ca050"/><path d="M8 11l2 2 4-4" fill="none" stroke="#fff" stroke-width="2"/></svg>
        </div>
        <i class="tri"></i>
        <button class="clean-screen" aria-label="全屏显示"></button>
    </footer>

    <!-- Taskbar -->
    <div class="taskbar">
        <button class="start" aria-label="开始"><svg viewBox="0 0 38 38"><circle cx="19" cy="19" r="18" fill="url(#orb)" stroke="#16344c"/><path d="M10 13q4-3 8-1l-2 7q-4-2-8 1z" fill="#e8602c"/><path d="M20 12q4 2 9 0l-3 8q-4 1-8-1z" fill="#8cc43c"/><path d="M8 21q4-3 8-1l-2 7q-4-1-7 1z" fill="#4aa0e8"/><path d="M17 21q4 2 8 0l-2 7q-4 2-8 0z" fill="#f8c428"/><ellipse cx="19" cy="9" rx="13" ry="7" fill="#fff" opacity=".3"/></svg></button>
        <button class="pin" aria-label="应用"><svg viewBox="0 0 32 32"><path d="M15 2q2 5-1 7-3 1-1 6-6 3-11-3-2-8 4-10 5-2 9 0z" fill="#a4cc28"/><path d="M30 8q0 8-8 9-2-4-6-3 0-12 8-13 5 1 6 7z" fill="#3f8ce8"/><path d="M16 28q-8 5-13 0-3-8 2-12 2 5 8 3 4 3 3 9z" fill="#f8c01c"/><path d="M29 18q4 8-2 12-6 2-10-1 2-5 0-8 4 0 6-4 4-1 6 1z" fill="#e8583c"/></svg></button>
        <button class="pin" aria-label="浏览器"><svg viewBox="0 0 32 32"><path d="M27 22q-3 6-10 6T5 18 17 7t11 11H11" fill="none" stroke="#2f9cf4" stroke-width="5"/><path d="M3 30Q-2 18 15 6 27-2 30 3q1 2-1 6" fill="none" stroke="#3a86e8" stroke-width="2"/></svg></button>
        <button class="task lit" aria-label="AutoCAD"><svg viewBox="0 0 32 32"><path d="M1 1h30v30H1z" fill="#1f8c84" stroke="#fff" stroke-width="2"/><path d="M4 26l6-20 7 20M6 19h9" fill="none" stroke="#e8f4f4" stroke-width="4"/><path d="M23 2v28M3 23h27" stroke="#fff"/><path d="M20 20h6v6h-6z" fill="#1f8c84" stroke="#fff" stroke-width="2"/></svg></button>
        <button class="task" aria-label="录像"><svg viewBox="0 0 32 32"><path d="M0 0h32v32H0z" fill="#1272e4"/><path d="M8 9h15v14H8zM4 8l4 8-4 8" fill="none" stroke="#fff" stroke-width="2"/><path d="M12 12l7 4-7 4z" fill="#fff"/><path d="M29 11v10l-4-3v-4z" fill="#fff"/></svg></button>
        <div class="tray">
            <svg class="kbd" viewBox="0 0 16 16"><path d="M0 7h16v7H0z" fill="#c9cbd0"/><path d="M2 9h12M2 11h12" stroke="#444" stroke-dasharray="1 1"/><path d="M3 6q1-4 5-3t5-2" fill="none" stroke="#c9cbd0"/></svg>
            <svg viewBox="0 0 16 16"><path d="M0 0h16v16H0z" fill="#1272e4"/><path d="M4 5h7v6H4zM2 4v8" fill="none" stroke="#fff"/><path d="M6 6l3 2-3 2zM14 5v6l-2-2V7z" fill="#fff"/></svg>
            <svg viewBox="0 0 16 16"><circle cx="8" cy="8" r="8" fill="#f4dc20"/><path d="M0 9q8 6 16-4 1 9-7 11T0 9z" fill="#5cb030"/><path d="M8 4v8M4 8h8" stroke="#143c14" stroke-width="2.500"/></svg>
            <svg viewBox="0 0 16 16"><path d="M10 1v14L2 9V7z" fill="#e07050"/></svg>
            <svg viewBox="0 0 16 16"><path d="M1 5h2l4-4v14l-4-4H1z" fill="#fff"/><circle cx="11" cy="11" r="4.500" fill="#e03c34"/><path d="M9 9l4 4M13 9l-4 4" stroke="#fff" stroke-width="1.500"/></svg>
            <svg viewBox="0 0 16 16"><path d="M5 4h10v8H5zM7 14h6M1 1v4h4V1M3 5v8h3" fill="none" stroke="#fff" stroke-width="1.500"/></svg>
            <span class="temp">23</span>
            <div class="clock"><time>17:18</time><span>2019/1/21 星期一</span></div>
        </div>
        <button class="peek" aria-label="显示桌面"></button>
    </div>

    <!-- Communication center balloon -->
    <aside class="balloon">
        <div class="balloon-head">
            <svg viewBox="0 0 16 16"><circle cx="8" cy="8" r="7.500" fill="#2450b8" stroke="#7a94c8"/><path d="M7 7h3v6H7zM7 3h3v2H7z" fill="#fff"/></svg>
            <strong>通讯中心</strong>
            <button aria-label="关闭通知"><svg viewBox="0 0 10 10"><path d="M1 1l8 8M9 1L1 9" stroke="#000" stroke-width="2"/></svg></button>
        </div>
        <p>使软件保持最新的简单方法。<br><a href="#">单击此处。</a></p>
        <svg class="tail" viewBox="0 0 22 20"><path d="M1 0l18 19V0" fill="#ffffe1" stroke="#000" stroke-width="1.500"/></svg>
    </aside>
</div>

<script src="tools.js"></script>
</body>
</html>
```

FILE: tools.js
```
// Letters that sit on top of an icon
var letters = {
    help: '<text class="letter help" x="8" y="13">?</text>',
    tstyle: '<text class="letter" x="5" y="14">A</text>',
    mtext: '<text class="letter" x="8" y="14">A</text>'
};

// Fill every toolbar from its data-tools list
// "|" is a separator, "v" and "x" are drop-down arrows (active / greyed)
document.querySelectorAll('[data-tools]').forEach(function(bar) {
    var html = '';
    bar.dataset.tools.split(' ').forEach(function(name) {
        if (name === '|') {
            html += '<i class="sep"></i>';
        } else if (name === 'v' || name === 'x') {
            html += '<button class="drop ' + name + '" aria-label="more"></button>';
        } else {
            html += '<button class="tool" aria-label="' + name + '"><svg><use href="#' + name + '"/>' + (letters[name] || '') + '</svg></button>';
        }
    });
    bar.innerHTML = html;
});
```

FILE: styles.css
```
* {
    box-sizing: border-box;
}
body {
    margin: 0;
    padding: 8px;
    height: 100vh;
    background-color: #fdfdfd;
    font-family: "Liberation Sans", "Noto Sans CJK SC", sans-serif;
    font-size: 12px;
    color: #000;
}
button {
    margin: 0;
    padding: 0;
    border: none;
    background: none;
    font: inherit;
    color: inherit;
}
svg {
    display: block;
}
.sprite {
    position: absolute;
    width: 0;
    height: 0;
}
.letter {
    font-family: "Noto Sans", sans-serif;
    font-size: 16px;
    text-anchor: middle;
}
.letter.help {
    fill: #fff;
    font-size: 14px;
    font-weight: bold;
}
.desktop {
    position: relative;
    display: flex;
    flex-direction: column;
    height: 100%;
    background-color: #eeeeee;
    box-shadow: 0 0 6px 2px #8c8c8c;
}

/* title bar */
.titlebar {
    display: flex;
    align-items: center;
    height: 22px;
    flex: none;
    border-bottom: 1px solid #000;
    background: linear-gradient(90deg, #a9adb3 0, #7c8088 120px, #6d717a 430px, #10182a 465px, #0a1122 60%, #0d1526 92%, #3a424e 95%, #555c66 100%);
}
.titlebar h1 {
    margin: 0;
    flex: 1;
    font-family: Roboto, "Noto Sans CJK SC", sans-serif;
    font-size: 13px;
    line-height: 20px;
    font-weight: normal;
    color: #05070c;
    white-space: nowrap;
}
.app-icon {
    width: 15px;
    height: 15px;
    margin: 0 6px 0 1px;
}
.caption {
    display: flex;
    align-self: flex-start;
    height: 18px;
    margin-right: 3px;
    border: 1px solid #c4c8ce;
    border-top: none;
    border-radius: 0 0 5px 5px;
    overflow: hidden;
}
.caption button {
    display: flex;
    align-items: center;
    justify-content: center;
    width: 28px;
    border-right: 1px solid #c4c8ce;
    background: linear-gradient(#8d939c, #4a515c 50%, #2b323e);
}
.caption .close {
    width: 46px;
    border-right: none;
    background: linear-gradient(#e0967c, #c8482a 50%, #a52c10);
}
.caption svg {
    width: 12px;
    height: 12px;
    fill: #fff;
}

/* menu bar */
.menubar {
    display: flex;
    align-items: center;
    height: 20px;
    flex: none;
    border-bottom: 1px solid #b6bbd0;
    background: linear-gradient(#ffffff, #eef1fa 40%, #dde2f4);
    font-family: "Noto Sans", "Noto Sans CJK SC", sans-serif;
}
.menubar > button {
    padding: 0 8px 0 7px;
    line-height: 18px;
    white-space: nowrap;
}
.doc-icon {
    width: 16px;
    height: 16px;
    margin: 0 0 0 7px;
}
.mdi {
    display: flex;
    gap: 2px;
    margin-left: auto;
    padding-right: 2px;
}
.mdi button {
    display: flex;
    align-items: center;
    justify-content: center;
    width: 17px;
    height: 18px;
    border: 1px solid #9cb4c4;
    background-color: #dfebf7;
}
.mdi svg {
    width: 12px;
    height: 12px;
    fill: #6f7f8e;
}

/* toolbars */
.bars {
    flex: none;
    padding-top: 1px;
}
.bar-row {
    display: flex;
    height: 28px;
    gap: 2px;
}
.bar {
    display: flex;
    align-items: center;
    height: 27px;
    padding-right: 2px;
    border: 1px solid #fff;
    border-right-color: #a5a5a5;
    border-bottom-color: #a5a5a5;
}
.bar::before {
    content: "";
    width: 6px;
    height: 24px;
    margin: 0 1px 0 3px;
    border: solid #a8a8a8;
    border-width: 0 1px;
    background: linear-gradient(90deg, #fff 1px, #efefef 1px 3px, #a8a8a8 3px 4px);
}
.tools {
    display: flex;
    align-items: center;
}
.tool {
    display: flex;
    align-items: center;
    justify-content: center;
    width: 23px;
    height: 22px;
}
.tool svg {
    width: 16px;
    height: 16px;
}
.sep {
    width: 1px;
    height: 22px;
    margin: 0 3px 0 2px;
    background-color: #8e8e8e;
}
.drop {
    display: flex;
    justify-content: center;
    width: 13px;
}
.drop::after,
.combo::after,
.tri {
    content: "";
    border: 4px solid transparent;
    border-top-color: #000;
    border-bottom: none;
}
.drop::after {
    border-width: 3px;
    border-bottom: none;
}
.drop.x::after {
    border-top-color: #b4b4b4;
}
.combo {
    display: flex;
    align-items: center;
    gap: 2px;
    height: 21px;
    padding: 0 3px 0 4px;
    border: 1px solid #dcdcdc;
    background-color: #fff;
}
.combo select {
    appearance: none;
    flex: 1;
    min-width: 0;
    height: 18px;
    padding: 0 2px;
    border: none;
    background: none;
    font-family: "Liberation Serif", "Noto Sans CJK SC", serif;
    font-size: 12px;
    color: #000;
    opacity: 1;
}
.combo svg {
    width: 16px;
    height: 16px;
}
.combo.style {
    width: 99px;
}
.combo.space {
    width: 174px;
}
.combo.layer {
    width: 298px;
    gap: 0;
}
.combo.color {
    width: 148px;
}
.combo.ltype {
    width: 159px;
}
.combo.lweight {
    width: 125px;
}
.combo.plot {
    width: 119px;
}
.combo.view {
    width: 138px;
}
.combo.off {
    border-color: #b0b0b0;
    background-color: #f0f0f0;
}
.combo.off select {
    color: #777;
}
.combo.off::after {
    border-top-color: #b0b0b0;
}
.swatch {
    width: 10px;
    height: 11px;
    border: 1px solid #000;
    background-color: #fff;
}
.stroke {
    width: 60px;
    height: 1px;
    background-color: #000;
}
.lweight .stroke {
    width: 35px;
}

/* draw toolbar and model space */
.work {
    display: flex;
    flex: 1;
    min-height: 0;
    padding-right: 2px;
}
.side {
    width: 27px;
    flex: none;
}
.drawbar {
    display: flex;
    flex-direction: column;
    width: 24px;
    padding-bottom: 5px;
    border: solid #a5a5a5;
    border-width: 0 1px 1px 0;
    border-left: 1px solid #fff;
}
.drawbar::before {
    content: "";
    height: 6px;
    margin: 1px 1px 1px 2px;
    border: solid #a8a8a8;
    border-width: 1px 0;
    background-color: #fafafa;
}
.drawbar .tool {
    width: 22px;
}
.view-wrap {
    display: flex;
    flex-direction: column;
    flex: 1;
    min-width: 0;
    border: solid #7c7c7c;
    border-width: 1px 0 0 1px;
}
.model {
    width: 100%;
    flex: 1;
    min-height: 0;
    background-color: #000;
}
.wire path,
.picked path,
.ucs path {
    fill: none;
    stroke: #fff;
    stroke-width: 1;
    shape-rendering: crispEdges;
}
.wire .bold {
    stroke-width: 2;
}
.picked path {
    stroke-dasharray: 3 3;
}
.grips {
    fill: #0040ff;
    stroke: #44506a;
    stroke-width: 1;
}
.ucs text {
    fill: #fff;
    font-family: Lato, sans-serif;
    font-weight: 300;
    font-size: 28px;
}
.tabs {
    display: flex;
    height: 15px;
    flex: none;
}
.nav {
    display: flex;
    align-items: center;
    justify-content: center;
    width: 18px;
    border: solid #a5a5a5;
    border-width: 0 1px 1px 0;
}
.nav svg {
    width: 10px;
    height: 10px;
}
.tab {
    display: grid;
    width: 42px;
    line-height: 14px;
}
.tab svg,
.tab span {
    grid-area: 1 / 1;
}
.tab svg {
    width: 42px;
    height: 15px;
    fill: #fafafa;
    stroke: #000;
}
.nav + .active {
    margin-left: 3px;
}
.tab.active {
    color: #30d8f0;
}
.tab.active svg {
    fill: #000;
}

/* command line */
.command {
    flex: none;
    height: 65px;
    padding-top: 2px;
    border-bottom: 1px solid #9a9a9a;
    background: linear-gradient(#fff 1px, #eee 1px 5px, #707070 5px 7px, #eee 7px);
}
.cmd-box {
    height: 46px;
    margin: 14px 0 0 5px;
    padding-left: 12px;
    background: linear-gradient(90deg, #a8a8a8 1px, #fff 1px 3px, #a8a8a8 3px 4px, #eee 4px 7px, #a8a8a8 7px 8px, #eee 8px);
    font-family: "Noto Sans CJK SC", sans-serif;
    font-size: 15px;
    color: #222;
}
.cmd-log,
.cmd-line {
    display: flex;
    align-items: center;
    height: 25px;
    padding-left: 1px;
    border: solid #6c6c6c;
    border-width: 2px 0 1px 1px;
    background-color: #fff;
    line-height: 20px;
}
.cmd-log {
    align-items: flex-start;
    line-height: 16px;
}
.cmd-line {
    height: 21px;
    border-width: 0 0 0 1px;
}
.cmd-line input {
    flex: 1;
    min-width: 0;
    height: 18px;
    border: none;
    outline: none;
    background: none;
    font: inherit;
}
.vscroll {
    display: flex;
    flex-direction: column;
    align-items: center;
    justify-content: space-around;
    width: 17px;
    height: 22px;
    margin-left: auto;
    background-color: #f2f2f2;
}
.up,
.down {
    border: 3px solid transparent;
    border-bottom-color: #555;
    border-top: none;
}
.down {
    border-top: 3px solid #555;
    border-bottom: none;
}
.hscroll {
    width: 38px;
    height: 17px;
    padding: 5px 8px;
    background-color: #f4f4f4;
}
.hscroll::before {
    content: "";
    display: block;
    width: 0;
    border: 4px solid transparent;
    border-left-color: #555;
    border-right: none;
}

/* status bar */
.status {
    display: flex;
    align-items: center;
    height: 22px;
    flex: none;
    gap: 4px;
    padding-left: 5px;
    border-top: 1px solid #9a9a9a;
    background-color: #f0eeee;
}
.command,
.status {
    border-right: 7px solid #343c4c;
}
.coords {
    width: 192px;
    height: 18px;
    padding-left: 1px;
    border: 1px solid #a0a0a0;
    border-right-color: #fff;
    border-bottom-color: #fff;
    font-family: "Liberation Serif", serif;
    font-size: 14px;
    line-height: 17px;
    white-space: nowrap;
}
.status > button {
    height: 18px;
    padding: 0 1px;
    border: 1px solid #fafafa;
    border-right-color: #999;
    border-bottom-color: #999;
    line-height: 16px;
    white-space: nowrap;
}
.status > .on {
    padding: 1px 0 0 2px;
    border-color: #000 #fff #fff #000;
}
.status > .en {
    font-family: "Liberation Mono", monospace;
    font-size: 10px;
}
.status-tray {
    display: flex;
    gap: 4px;
    width: 64px;
    height: 18px;
    margin-left: auto;
    margin-right: 2px;
    padding: 0 2px;
    border: 1px solid #999;
    border-right-color: #fff;
    border-bottom-color: #fff;
}
.status-tray svg {
    width: 16px;
    height: 16px;
}
.status > .clean-screen {
    width: 13px;
    height: 15px;
    border: 1px solid #24518c;
    border-right: none;
    background: linear-gradient(135deg, #e6f1fc, #8fb8e0);
}

/* taskbar */
.taskbar {
    display: flex;
    align-items: center;
    height: 39px;
    flex: none;
    border-top: 1px solid #8289a0;
    background: linear-gradient(90deg, #10121f, #0b1634 25%, #0c1a38 42%, #27385a 48%, #16233f 52%, #0a1630 62%, #070d1c 80%, #161c2a);
}
.start {
    margin-left: 8px;
}
.start svg {
    width: 38px;
    height: 38px;
}
.pin {
    display: flex;
    justify-content: center;
    width: 60px;
}
.pin svg,
.task svg {
    width: 32px;
    height: 32px;
}
.start + .pin {
    margin-left: 8px;
}
.pin + .task {
    margin-left: 6px;
}
.task {
    display: flex;
    align-items: center;
    justify-content: center;
    width: 58px;
    height: 38px;
    margin-right: 4px;
    border: 1px solid #70788a;
    border-radius: 3px;
    background: linear-gradient(#4a5060, #20263a);
}
.task.lit {
    border-color: #dfe2e8;
    background: linear-gradient(#a9adb6, #70757f 50%, #9ea3ac);
}
.tray {
    display: flex;
    align-items: center;
    gap: 8px;
    margin-left: auto;
    color: #fff;
}
.tray svg {
    width: 16px;
    height: 16px;
}
.tray .kbd {
    margin-right: 7px;
}
.temp {
    width: 23px;
    height: 23px;
    margin: 0 7px 0 6px;
    border: 2px solid #12b070;
    border-radius: 50%;
    background-color: #1a3a3c;
    font-size: 13px;
    line-height: 19px;
    text-align: center;
}
.clock {
    display: flex;
    flex-direction: column;
    align-items: center;
    font-family: "Noto Sans", "Noto Sans CJK SC", sans-serif;
    line-height: 18px;
    white-space: nowrap;
}
.peek {
    width: 14px;
    height: 38px;
    margin-left: 11px;
    border: 1px solid #5c6474;
    background: linear-gradient(90deg, #303848, #10141e);
}

/* balloon */
.balloon {
    position: absolute;
    right: 52px;
    bottom: 69px;
    width: 185px;
    height: 75px;
    padding: 7px 8px 0 9px;
    border: 1px solid #000;
    border-radius: 14px;
    background-color: #ffffe1;
}
.balloon-head {
    display: flex;
    align-items: center;
    height: 17px;
    gap: 10px;
    font-size: 13px;
}
.balloon-head svg {
    width: 16px;
    height: 16px;
}
.balloon-head button {
    display: flex;
    align-items: center;
    justify-content: center;
    width: 16px;
    height: 16px;
    margin-left: auto;
    border: 1px solid #999;
    background-color: #f0f0e8;
}
.balloon-head button svg {
    width: 10px;
    height: 10px;
}
.balloon p {
    margin: 4px 0 0 6px;
    line-height: 18px;
    white-space: nowrap;
}
.balloon a {
    color: #0000e0;
}
.tail {
    position: absolute;
    top: 72px;
    right: 40px;
    width: 22px;
    height: 20px;
}
```
